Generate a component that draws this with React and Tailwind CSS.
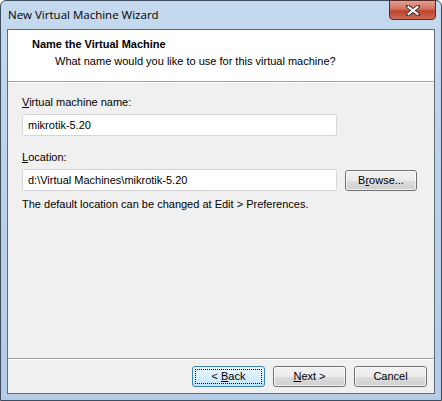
import React from 'react';

const body = { fontFamily: '"Liberation Sans", Arial, sans-serif' };

function WinButton({ children, focused, className = '' }) {
  if (focused) {
    return (
      <div className={`h-[21px] rounded-[3px] border border-[#3c7fb1] bg-gradient-to-b from-[#eaf6fd] via-[#d9f0fc] to-[#bee6fd] p-[2px] ${className}`}>
        <div className="flex h-full items-center justify-center border border-dotted border-black text-[11px] leading-[13px] text-black">
          {children}
        </div>
      </div>
    );
  }
  return (
    <div className={`h-[21px] rounded-[3px] border border-[#707070] bg-[linear-gradient(to_bottom,#f2f2f2_0%,#ebebeb_50%,#dddddd_51%,#cfcfcf_100%)] ${className}`}>
      <div className="flex h-full items-center justify-center rounded-[2px] border border-white/70 text-[11px] leading-[13px] text-black">
        {children}
      </div>
    </div>
  );
}

function TextBox({ value }) {
  return (
    <div className="flex h-[22px] w-[315px] items-center rounded-[2px] border border-[#d6d6d6] bg-white px-[5px] text-[11px] leading-[13px] text-black">
      {value}
    </div>
  );
}

export default function App() {
  return (
    <div
      className="flex h-[401px] w-[442px] flex-col rounded-t-[6px] border border-[#3d4d5e] bg-[linear-gradient(to_bottom,#c5d9ee_0%,#bcd2ea_40%,#b4cce6_100%)] px-[6px] pb-[6px]"
      style={body}
    >
      {/* title bar */}
      <div className="flex h-[28px] items-start">
        <div
          className="pt-[6px] pl-[1px] text-[11.5px] leading-[16px] text-black"
          style={{ fontFamily: '"Open Sans", "Liberation Sans", sans-serif' }}
        >
          New Virtual Machine Wizard
        </div>
        <div className="flex-1" />
        <div className="-mt-px mr-[-1px] flex h-[20px] w-[47px] items-center justify-center rounded-b-[4px] border border-[#5a2a28] bg-[linear-gradient(to_bottom,#e3a091_0%,#d2705f_45%,#c0432f_55%,#cc6a55_100%)]">
          <svg width="14" height="11" viewBox="0 0 14 11">
            <path
              d="M2 1.5 L12 9.5 M12 1.5 L2 9.5"
              stroke="#3a3a3a"
              strokeWidth="4"
              strokeLinecap="square"
            />
            <path
              d="M2.5 2 L11.5 9 M11.5 2 L2.5 9"
              stroke="#ffffff"
              strokeWidth="2"
              strokeLinecap="square"
            />
          </svg>
        </div>
      </div>

      {/* client area */}
      <div className="flex flex-1 flex-col border border-[#5f6b78] bg-[#f0f0f0]">
        {/* header */}
        <div className="h-[52px] border-b border-[#a0a0a0] bg-white pl-[24px] pt-[8px]">
          <div className="text-[11px] leading-[13px] font-bold text-black">Name the Virtual Machine</div>
          <div className="mt-[4px] pl-[23px] text-[11px] leading-[13px] text-black">
            What name would you like to use for this virtual machine?
          </div>
        </div>
        <div className="h-px bg-white" />

        {/* body */}
        <div className="flex flex-1 flex-col px-[14px] pt-[13px]">
          <div className="text-[11px] leading-[13px] text-black">
            <span className="underline">V</span>irtual machine name:
          </div>
          <div className="mt-[5px]">
            <TextBox value="mikrotik-5.20" />
          </div>

          <div className="mt-[15px] text-[11px] leading-[13px] text-black">
            <span className="underline">L</span>ocation:
          </div>
          <div className="mt-[5px] flex items-center gap-[8px]">
            <TextBox value="d:\Virtual Machines\mikrotik-5.20" />
            <WinButton className="w-[72px]">
              <span>
                B<span className="underline">r</span>owse...
              </span>
            </WinButton>
          </div>
          <div className="mt-[7px] text-[11px] leading-[13px] text-black">
            The default location can be changed at Edit &gt; Preferences.
          </div>
        </div>

        {/* footer */}
        <div className="border-t border-[#a0a0a0]">
          <div className="h-px bg-white" />
          <div className="flex h-[33px] items-start justify-end gap-[8px] pr-[7px] pt-[6px]">
            <WinButton focused className="w-[73px]">
              <span>
                &lt; <span className="underline">B</span>ack
              </span>
            </WinButton>
            <WinButton className="w-[73px]">
              <span>
                <span className="underline">N</span>ext &gt;
              </span>
            </WinButton>
            <WinButton className="w-[73px]">Cancel</WinButton>
          </div>
        </div>
      </div>
    </div>
  );
}
